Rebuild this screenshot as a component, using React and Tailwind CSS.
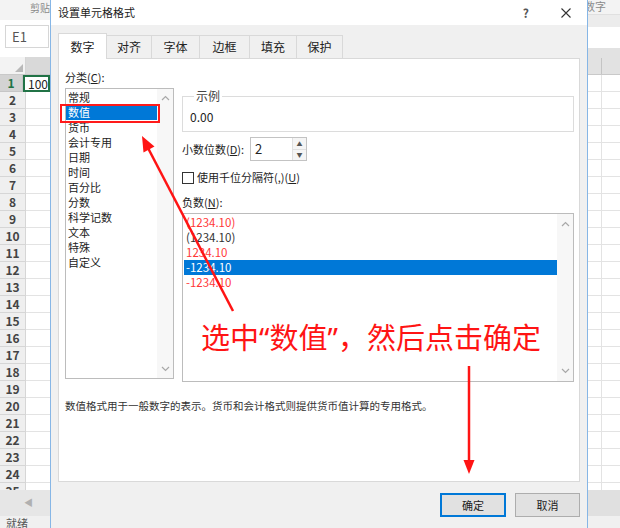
import React from 'react'

const categories = ['常规', '数值', '货币', '会计专用', '日期', '时间', '百分比', '分数', '科学记数', '文本', '特殊', '自定义']

const negatives = [
  { text: '(1234.10)', red: true },
  { text: '(1234.10)' },
  { text: '1234.10', red: true },
  { text: '-1234.10', selected: true },
  { text: '-1234.10', red: true },
]

const rows = Array.from({ length: 25 }, (_, i) => i + 1)

function Chevron({ up }) {
  return (
    <svg width="9" height="6" viewBox="0 0 9 6">
      <path d={up ? 'M1 5 L4.5 1.5 L8 5' : 'M1 1 L4.5 4.5 L8 1'} fill="none" stroke="#a8a8a8" strokeWidth="1.2" />
    </svg>
  )
}

function LeftSheet() {
  return (
    <div className="w-[50px] shrink-0 flex flex-col bg-white">
      <div className="h-[20px] bg-[#f3f3f3] pl-[30px] pt-[1px] text-[10px] leading-[14px] text-[#8a8a8a] whitespace-nowrap overflow-hidden">剪贴</div>
      <div className="h-[37px] pt-[5px] pl-[5px]">
        <div className="w-[44px] h-[23px] border border-[#d6d6d6] pl-[6px] text-[13px] leading-[21px] text-[#555]">E1</div>
      </div>
      <div className="h-[18px] flex border-b border-[#c9c9c9]">
        <div className="w-[26px] bg-[#f3f3f3] border-r border-[#d4d4d4] flex items-end justify-end p-[2px]">
          <svg width="8" height="8" viewBox="0 0 8 8">
            <path d="M8 0 L8 8 L0 8 Z" fill="#b9b9b9" />
          </svg>
        </div>
        <div className="flex-1 bg-[#d9d9d9]" />
      </div>
      <div className="h-[415px] overflow-hidden">
        {rows.map((n) => (
          <div key={n} className="h-[17px] flex">
            <div
              className={
                n === 1
                  ? 'w-[26px] border-r border-b border-[#c6c6c6] bg-[#d3d3d3] text-center text-[12px] leading-[16px] font-semibold text-[#217346]'
                  : 'w-[26px] border-r border-b border-[#d6d6d6] bg-[#efefef] text-center text-[12px] leading-[16px] font-semibold text-[#444]'
              }
            >
              {n}
            </div>
            <div className="flex-1 border-b border-[#e3e3e3]">
              {n === 1 && (
                <div className="h-[17px] border-2 border-[#217346] pl-[3px] text-[12px] leading-[13px] text-[#222] whitespace-nowrap overflow-hidden">100</div>
              )}
            </div>
          </div>
        ))}
      </div>
      <div className="h-[26px] bg-[#e6e6e6] flex items-center pl-[24px] text-[9px] text-[#b0b0b0]">◀</div>
      <div className="flex-1 bg-[#f0f0f0] pl-[6px] text-[11px] leading-[14px] text-[#555] overflow-hidden">就绪</div>
    </div>
  )
}

function RightSheet() {
  return (
    <div className="w-[32px] shrink-0 flex flex-col bg-white overflow-hidden">
      <div className="h-[15px] bg-[#f3f3f3] border-b border-[#e0e0e0] -ml-[4px] text-[11px] leading-[12px] text-[#8a8a8a] whitespace-nowrap">数字</div>
      <div className="h-[12px] bg-[#ececec]" />
      <div className="h-[21px] bg-white" />
      <div className="h-[27px] bg-[#e2e2e2] flex border-b border-[#c9c9c9]">
        <div className="w-[14px] border-r border-[#c4c4c4] mt-[10px]" />
      </div>
      <div className="h-[415px] overflow-hidden">
        {rows.map((n) => (
          <div key={n} className="h-[17px] flex border-b border-[#e3e3e3]">
            <div className="w-[14px] border-r border-[#e3e3e3]" />
          </div>
        ))}
      </div>
      <div className="h-[26px] bg-[#e0e0e0]" />
      <div className="flex-1 bg-[#f0f0f0]" />
    </div>
  )
}

function Dialog() {
  const tabs = [
    { label: '对齐', w: 'w-[45px]' },
    { label: '字体', w: 'w-[48px]' },
    { label: '边框', w: 'w-[50px]' },
    { label: '填充', w: 'w-[47px]' },
    { label: '保护', w: 'w-[46px]' },
  ]
  return (
    <div className="w-[538px] shrink-0 flex flex-col bg-[#f0f0f0] border-x border-[#86b6e6]">
      {/* title bar */}
      <div className="h-[25px] shrink-0 bg-white flex items-center pl-[7px]">
        <span className="text-[11px] text-[#1a1a1a]">设置单元格格式</span>
        <span className="ml-auto mr-[32px] text-[12px] font-bold text-[#555]">?</span>
        <svg width="10" height="10" viewBox="0 0 10 10" className="mr-[16px]">
          <path d="M0.5 0.5 L9.5 9.5 M9.5 0.5 L0.5 9.5" stroke="#333" strokeWidth="1.1" />
        </svg>
      </div>

      {/* tabs */}
      <div className="h-[33px] shrink-0 flex items-end px-[7px]">
        <div className="relative z-10 w-[49px] h-[26px] -mb-px bg-white border border-b-0 border-[#d9d9d9] flex items-center justify-center text-[12px] text-[#222]">数字</div>
        {tabs.map((t) => (
          <div key={t.label} className={`${t.w} h-[23px] border-t border-r border-[#d9d9d9] flex items-center justify-center text-[12px] text-[#222]`}>
            {t.label}
          </div>
        ))}
      </div>

      {/* panel */}
      <div className="mx-[7px] h-[424px] shrink-0 bg-white border border-[#d9d9d9] flex flex-col pt-[10px] pl-[6px] pr-[5px] text-[11px] text-[#222]">
        <div className="flex gap-[8px] items-start">
          {/* category column */}
          <div className="w-[109px] shrink-0">
            <div className="h-[16px] leading-[16px]">
              分类(<u>C</u>):
            </div>
            <div className="mt-[3px] h-[291px] border border-[#bcbcbc] flex">
              <div className="flex-1 pt-[1px]">
                {categories.map((c) => (
                  <div
                    key={c}
                    className={
                      c === '数值'
                        ? 'h-[15px] leading-[15px] pl-[2px] bg-[#0078d7] text-white'
                        : 'h-[15px] leading-[15px] pl-[2px]'
                    }
                  >
                    {c}
                  </div>
                ))}
              </div>
              <div className="w-[16px] bg-[#f7f7f7] flex flex-col items-center justify-between pt-[6px] pb-[6px]">
                <Chevron up />
                <Chevron />
              </div>
            </div>
          </div>

          {/* right column */}
          <div className="flex-1 pt-[19px]">
            <fieldset className="h-[44px] border border-[#dcdcdc] pl-[7px]">
              <legend className="ml-[4px] px-[2px] text-[12px] leading-[16px] text-[#444]">示例</legend>
              <div className="pt-[5px] text-[12px] leading-[16px] text-[#222]">0.00</div>
            </fieldset>

            <div className="mt-[5px] h-[24px] flex items-center">
              <span className="w-[68px]">
                小数位数(<u>D</u>):
              </span>
              <div className="w-[57px] h-[24px] border border-[#c3c3c3] flex">
                <div className="flex-1 pl-[4px] text-[13px] leading-[22px]">2</div>
                <div className="w-[14px] flex flex-col border-l border-[#e0e0e0] bg-[#f5f5f5]">
                  <div className="flex-1 flex items-center justify-center text-[6px] text-[#555] border-b border-[#e0e0e0]">▲</div>
                  <div className="flex-1 flex items-center justify-center text-[6px] text-[#555]">▼</div>
                </div>
              </div>
            </div>

            <div className="mt-[10px] h-[13px] flex items-center gap-[3px]">
              <div className="w-[12px] h-[12px] border border-[#333] bg-white" />
              <span className="leading-[13px]">
                使用千位分隔符(,)(<u>U</u>)
              </span>
            </div>

            <div className="mt-[10px] h-[16px] leading-[16px]">
              负数(<u>N</u>):
            </div>

            <div className="mt-[3px] h-[169px] border border-[#bcbcbc] flex">
              <div className="flex-1 pt-[1px] pl-[1px] text-[11.5px]">
                {negatives.map((n, i) => (
                  <div
                    key={i}
                    className={
                      n.selected
                        ? 'h-[15px] leading-[15px] pl-[2px] bg-[#0078d7] text-white'
                        : n.red
                          ? 'h-[15px] leading-[15px] pl-[2px] text-[#ff3838]'
                          : 'h-[15px] leading-[15px] pl-[2px] text-[#333]'
                    }
                  >
                    {n.text}
                  </div>
                ))}
              </div>
              <div className="w-[16px] bg-[#f7f7f7] flex flex-col items-center justify-between pt-[7px] pb-[7px]">
                <Chevron up />
                <Chevron />
              </div>
            </div>
          </div>
        </div>

        <div className="mt-[16px] h-[16px] leading-[16px] text-[10.5px] text-[#333] whitespace-nowrap">
          数值格式用于一般数字的表示。货币和会计格式则提供货币值计算的专用格式。
        </div>
      </div>

      {/* buttons */}
      <div className="mt-[11px] flex justify-end gap-[9px] px-[7px]">
        <div className="w-[66px] h-[24px] border-2 border-[#0078d7] bg-[#e1e1e1] flex items-center justify-center text-[11px] text-[#222]">确定</div>
        <div className="w-[65px] h-[24px] border border-[#adadad] bg-[#e1e1e1] flex items-center justify-center text-[11px] text-[#222]">取消</div>
      </div>
    </div>
  )
}

export default function App() {
  return (
    <div className="relative w-[620px] h-[528px] overflow-hidden flex bg-white font-['Noto_Sans_CJK_SC',sans-serif]">
      <LeftSheet />
      <Dialog />
      <RightSheet />

      {/* annotations drawn over the screenshot */}
      <div className="absolute left-[60px] top-[104px] w-[100px] h-[19px] border-2 border-[#ff1a1a] pointer-events-none" />
      <div className="absolute left-[201px] top-[320px] text-[29px] leading-[32px] text-[#ff1414] whitespace-nowrap pointer-events-none">
        选中<span className="font-['Noto_Sans',sans-serif]">“</span>数值<span className="font-['Noto_Sans',sans-serif]">”</span>，然后点击确定
      </div>
      <svg className="absolute inset-0 pointer-events-none" width="620" height="528" viewBox="0 0 620 528">
        <line x1="233" y1="311" x2="148" y2="148" stroke="#ff1414" strokeWidth="2.5" />
        <polygon points="142,136 154.5,146.5 143.5,152.5" fill="#ff1414" />
        <line x1="469" y1="366" x2="469" y2="462" stroke="#ff1414" strokeWidth="2.5" />
        <polygon points="469,474 463.5,460 474.5,460" fill="#ff1414" />
      </svg>
    </div>
  )
}
